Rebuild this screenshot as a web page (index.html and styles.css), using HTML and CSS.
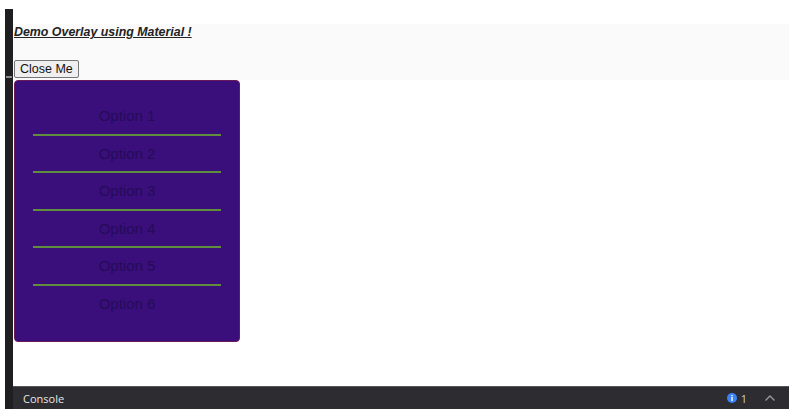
FILE: index.html
```html
<!DOCTYPE html>
<html>
<head>
<meta charset="utf-8">
<link rel="stylesheet" href="styles.css">
</head>
<body>
<div class="frame">
  <div class="rail"><span class="grip"></span></div>
  <div class="main">
    <div class="preview">
      <div class="band">
        <h1 class="title">Demo Overlay using Material !</h1>
        <button class="close">Close Me</button>
      </div>
      <div class="overlay">
        <div class="option">Option 1</div>
        <div class="option">Option 2</div>
        <div class="option">Option 3</div>
        <div class="option">Option 4</div>
        <div class="option">Option 5</div>
        <div class="option last">Option 6</div>
      </div>
    </div>
    <div class="console">
      <span class="console-label">Console</span>
      <span class="console-right">
        <span class="info"><svg width="10" height="10" viewBox="0 0 10 10"><circle cx="5" cy="5" r="5" fill="#3b82f6"/><rect x="4.3" y="4" width="1.4" height="4" fill="#fff"/><rect x="4.3" y="2" width="1.4" height="1.3" fill="#fff"/></svg><span class="count">1</span></span>
        <svg class="chev" width="12" height="8" viewBox="0 0 12 8"><path d="M1.5 6.5 L6 2 L10.5 6.5" fill="none" stroke="#9a9aa0" stroke-width="1.3"/></svg>
      </span>
    </div>
  </div>
</div>
</body>
</html>
```
FILE: styles.css
```css
html, body {
  margin: 0;
  padding: 0;
  background: #ffffff;
}
.frame {
  margin: 9px 0 0 5px;
  width: 784px;
  height: 400px;
  display: flex;
}
.rail {
  width: 8px;
  background: #1f1f22;
  position: relative;
}
.grip {
  position: absolute;
  left: 1px;
  top: 67px;
  width: 6px;
  height: 2px;
  background: #8a8a8a;
}
.main {
  flex: 1;
  display: flex;
  flex-direction: column;
}
.preview {
  flex: 1;
  position: relative;
  background: #ffffff;
  padding-top: 15px;
}
.band {
  height: 56px;
  background: #fafafa;
  padding-left: 1px;
  box-sizing: border-box;
}
.title {
  margin: 0;
  padding-top: 1px;
  font-family: "Liberation Sans", Arial, sans-serif;
  font-size: 12.4px;
  line-height: 14px;
  font-weight: bold;
  font-style: italic;
  text-decoration: underline;
  color: #222222;
}
.close {
  margin-top: 21px;
  font-family: "Liberation Sans", Arial, sans-serif;
  font-size: 12.5px;
  line-height: 14px;
  padding: 1px 5px;
  background: #efefef;
  border: 1px solid #767676;
  border-radius: 2px;
  color: #111111;
  height: 18px;
  box-sizing: border-box;
  display: block;
  margin-left: 0;
}
.overlay {
  position: absolute;
  left: 1px;
  top: 71px;
  width: 226px;
  height: 262px;
  box-sizing: border-box;
  background: #3a0f7c;
  border: 1px solid #6a1a5a;
  border-radius: 4px;
  padding: 17px 18px 0 18px;
}
.option {
  height: 35.5px;
  border-bottom: 2px solid #5f8f3c;
  display: flex;
  align-items: center;
  justify-content: center;
  font-family: "Liberation Sans", Arial, sans-serif;
  font-size: 15px;
  color: #250c58;
}
.option.last {
  border-bottom: none;
}
.console {
  height: 23px;
  background: #2c2c31;
  border-top: 1px solid #55555c;
  box-sizing: border-box;
  display: flex;
  align-items: center;
  justify-content: space-between;
  padding: 0 13px 0 10px;
}
.console-label {
  font-family: "Open Sans", sans-serif;
  font-size: 11px;
  color: #e6e6e6;
}
.console-right {
  display: flex;
  align-items: center;
  gap: 17px;
}
.info {
  display: flex;
  align-items: center;
  gap: 4px;
}
.count {
  font-family: "Open Sans", sans-serif;
  font-size: 11px;
  color: #d0d0d0;
}
```
